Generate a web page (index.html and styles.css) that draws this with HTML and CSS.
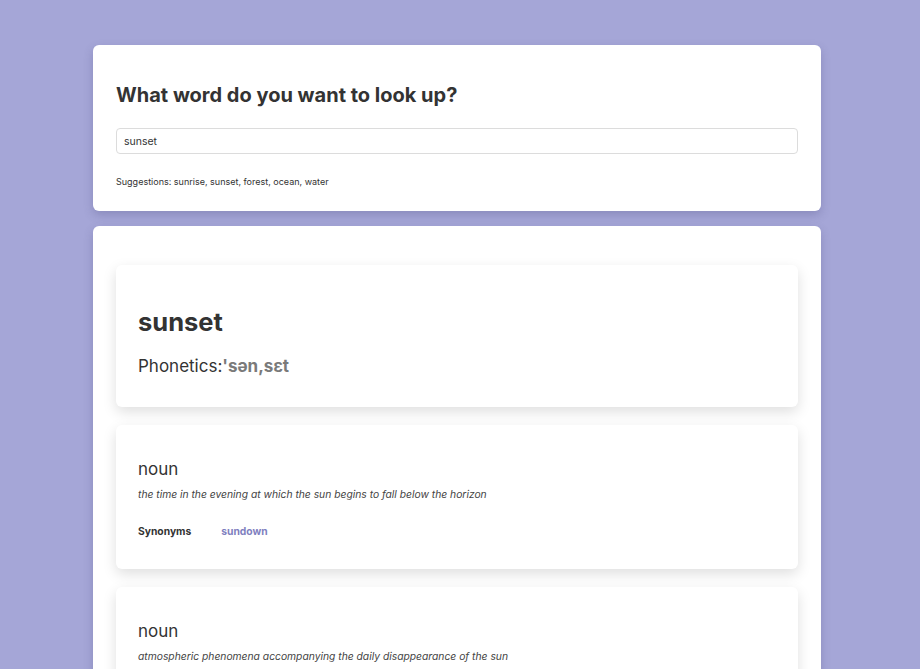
FILE: index.html
```html
<!DOCTYPE html>
<html lang="en">
<head>
<meta charset="utf-8">
<title>Dictionary</title>
<link rel="stylesheet" href="styles.css">
</head>
<body>
<div class="app">
  <section class="panel search-panel">
    <h1 class="prompt">What word do you want to look up?</h1>
    <input class="search-input" type="search" value="sunset">
    <p class="hint">Suggestions: sunrise, sunset, forest, ocean, water</p>
  </section>
  <section class="panel results-panel">
    <article class="card word-card">
      <h2 class="word">sunset</h2>
      <p class="phonetics">Phonetics:<span class="phonetic-text">'sən,sɛt</span></p>
    </article>
    <article class="card meaning-card">
      <h3 class="pos">noun</h3>
      <p class="definition">the time in the evening at which the sun begins to fall below the horizon</p>
      <div class="synonyms">
        <span class="syn-label">Synonyms</span>
        <span class="syn-word">sundown</span>
      </div>
    </article>
    <article class="card meaning-card">
      <h3 class="pos">noun</h3>
      <p class="definition">atmospheric phenomena accompanying the daily disappearance of the sun</p>
    </article>
  </section>
</div>
</body>
</html>
```
FILE: styles.css
```css
html, body {
  margin: 0;
  padding: 0;
}
body {
  background: #a5a6d7;
  font-family: Inter, "Noto Sans", sans-serif;
  color: #333;
  height: 669px;
  overflow: hidden;
  padding-right: 6px;
}
.app {
  width: 728px;
  margin: 0 auto;
  padding-top: 45px;
  display: flex;
  flex-direction: column;
  gap: 15px;
}
.panel {
  background: #fff;
  border-radius: 6px;
  box-shadow: 0 4px 10px rgba(60, 60, 110, 0.25);
  padding: 0 23px;
}
.search-panel {
  padding-top: 36px;
  padding-bottom: 23px;
}
.prompt {
  margin: 0;
  font-size: 20px;
  font-weight: 700;
  line-height: 28px;
  color: #333;
}
.search-input {
  display: block;
  box-sizing: border-box;
  width: 100%;
  height: 26px;
  margin-top: 19px;
  padding: 0 7px;
  border: 1px solid #dcdcdc;
  border-radius: 4px;
  font-family: inherit;
  font-size: 10.5px;
  color: #333;
  outline: none;
  -webkit-appearance: none;
  appearance: none;
}
.hint {
  margin: 22px 0 0;
  font-size: 9px;
  line-height: 12px;
  color: #333;
}
.results-panel {
  padding-top: 39px;
  padding-bottom: 20px;
  display: flex;
  flex-direction: column;
  gap: 18px;
}
.card {
  background: #fff;
  border-radius: 6px;
  box-shadow: 0 5px 14px rgba(0, 0, 0, 0.13);
  padding: 0 22px;
}
.word-card {
  height: 142px;
  box-sizing: border-box;
  padding-top: 41px;
}
.word {
  margin: 0;
  font-size: 25.5px;
  font-weight: 700;
  line-height: 32px;
  color: #333;
}
.phonetics {
  margin: 16px 0 0;
  font-size: 17px;
  line-height: 24px;
  color: #333;
}
.phonetic-text {
  color: #7a7a7a;
  font-weight: 700;
}
.meaning-card {
  height: 144px;
  box-sizing: border-box;
  padding-top: 33px;
}
.pos {
  margin: 0;
  font-size: 17px;
  font-weight: 400;
  line-height: 22px;
  color: #333;
}
.definition {
  margin: 7px 0 0;
  font-size: 10.3px;
  font-style: italic;
  line-height: 14px;
  color: #444;
}
.synonyms {
  margin-top: 23px;
  display: flex;
  gap: 30px;
  font-size: 10.3px;
  font-weight: 700;
  line-height: 14px;
}
.syn-label {
  color: #333;
}
.syn-word {
  color: #7f7fc0;
}
```
